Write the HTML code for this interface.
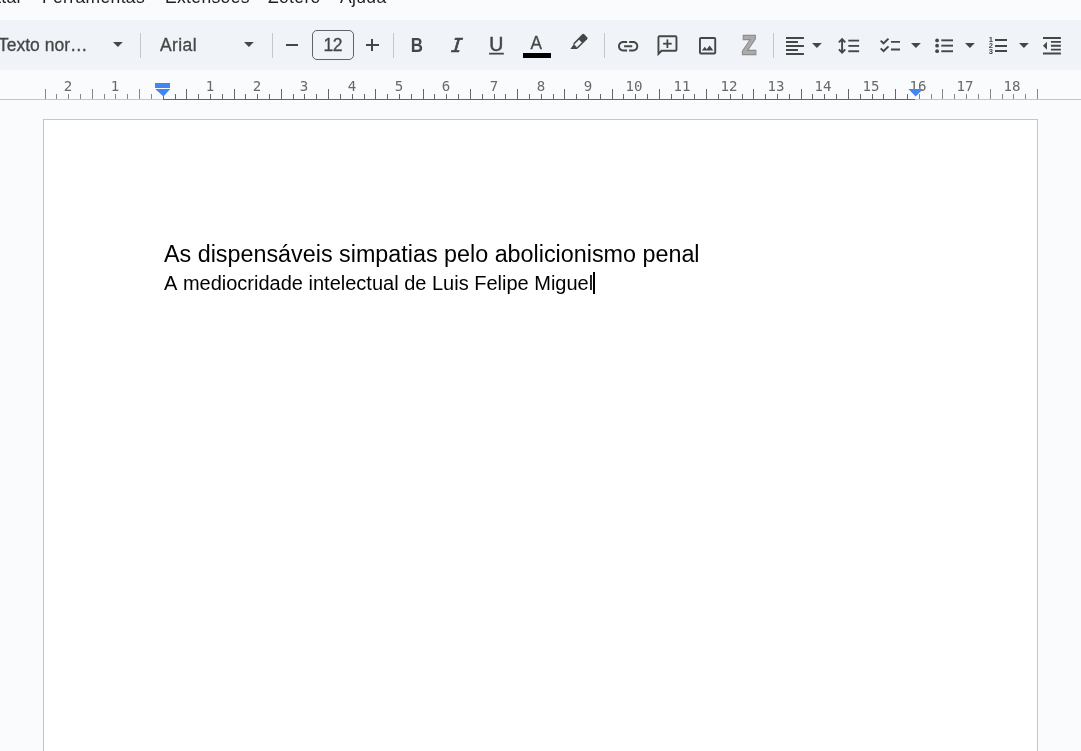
<!DOCTYPE html>
<html lang="pt-BR">
<head>
<meta charset="utf-8">
<title>Documento</title>
<style>
html,body{margin:0;padding:0}
body{width:1081px;height:751px;overflow:hidden;background:#f9fbfd;position:relative;font-family:"Liberation Sans",sans-serif;color:#444746}
.abs{position:absolute}
#menu span,.lbl,#fs,#ruler .n,.p1,.p2{will-change:transform}
#menu span{position:absolute;top:-13.200px;white-space:nowrap;font-size:17.5px;letter-spacing:.35px;color:#1f1f1f;line-height:20px}
#tb{position:absolute;left:-20px;top:20px;width:1120px;height:50px;background:#f0f4f9}
.sep{position:absolute;top:33px;width:1px;height:25px;background:#c7c7c7}
.lbl{position:absolute;top:34px;height:22px;line-height:22px;font-size:17.5px;color:#444746;white-space:nowrap;-webkit-text-stroke:.3px #444746}
.arr{position:absolute;top:43px;width:0;height:0;border-left:5px solid transparent;border-right:5px solid transparent;border-top:5px solid #444746}
svg.ic{position:absolute;display:block;fill:#444746;overflow:visible}
#fs{position:absolute;left:312px;top:30px;width:40px;height:28px;border:1px solid #5f6368;border-radius:5px;text-align:center;line-height:29px;font-size:17.5px;color:#444746;letter-spacing:-.7px;text-indent:-.7px;-webkit-text-stroke:.3px #444746}
#ruler{position:absolute;left:0;top:70px;width:1081px;height:30px}
#ruler .base{position:absolute;left:0;top:29px;width:1081px;height:1px;background:#c4c7c5}
#ruler .dark{position:absolute;left:163px;top:29px;width:752px;height:1px;background:#646765}
#ruler .t{position:absolute;top:24px;width:1px;height:5px;background:#646765}
#ruler .t.m{background:#858886}
#ruler .t.tl{top:19px;height:10px}
#ruler .n{position:absolute;top:8.4px;width:40px;text-align:center;font-family:"DejaVu Sans Mono","Liberation Mono",monospace;font-size:13.7px;line-height:16px;color:#666a68;transform:scaleX(1.03)}
#page{position:absolute;left:43px;top:119px;width:993px;height:700px;background:#fff;border:1px solid #c7c7c7}
.p1,.p2{font-kerning:none}
.p1{position:absolute;left:164px;top:240px;font-size:23.33px;line-height:28px;color:#000;white-space:nowrap}
.p2{position:absolute;left:164px;top:271px;font-size:20px;line-height:24px;color:#000;white-space:nowrap}
#caret{position:absolute;left:593px;top:272px;width:2px;height:22px;background:#000}
</style>
</head>
<body>
<div id="menu"><span style="right:1058.500px">Formatar</span><span style="left:42px">Ferramentas</span><span style="left:164.500px">Extensões</span><span style="left:268px">Zotero</span><span style="left:340px">Ajuda</span></div>
<div id="tb"></div>

<div class="lbl" style="left:-2px">Texto nor…</div>
<div class="sep" style="left:140px"></div>
<div class="lbl" style="left:160px;letter-spacing:.4px">Arial</div>
<div class="sep" style="left:272px"></div>
<div id="fs">12</div>
<div class="sep" style="left:393px"></div>
<div class="sep" style="left:604px"></div>
<div class="sep" style="left:773px"></div>

<svg class="ic" viewBox="2 7 20 10" preserveAspectRatio="none" style="left:618.3px;top:40.5px;width:20.3px;height:10.4px"><path d="M3.9 12c0-1.71 1.39-3.1 3.1-3.1h4V7H7c-2.76 0-5 2.24-5 5s2.24 5 5 5h4v-1.9H7c-1.71 0-3.1-1.39-3.1-3.1zM8 13h8v-2H8v2zm9-6h-4v1.900h4c1.710 0 3.100 1.390 3.100 3.100s-1.390 3.100-3.100 3.100h-4V17h4c2.760 0 5-2.240 5-5s-2.240-5-5-5z"/></svg>
<svg class="ic" viewBox="3 3 18 18" preserveAspectRatio="none" style="left:698.8px;top:37px;width:17.2px;height:17.4px"><path d="M19 5v14H5V5h14m0-2H5c-1.100 0-2 .9-2 2v14c0 1.100.9 2 2 2h14c1.100 0 2-.9 2-2V5c0-1.100-.9-2-2-2zm-4.860 8.860l-3 3.870L9 13.140 6 17h12l-3.860-5.140z"/></svg>
<svg class="ic" viewBox="3 3 18 18" preserveAspectRatio="none" style="left:786.1px;top:37px;width:17.9px;height:18px"><path d="M15 15H3v2h12v-2zm0-8H3v2h12V7zM3 13h18v-2H3v2zm0 8h18v-2H3v2zM3 3v2h18V3H3z"/></svg>
<svg class="ic" viewBox="2 3.93 20 15.07" preserveAspectRatio="none" style="left:880.2px;top:38.1px;width:20px;height:14.4px"><path d="M22 7h-9v2h9V7zm0 8h-9v2h9v-2zM5.540 11L2 7.460l1.410-1.410 2.120 2.120 4.240-4.240 1.410 1.410L5.540 11zm0 8L2 15.460l1.410-1.410 2.120 2.120 4.240-4.240 1.410 1.410L5.540 19z"/></svg>
<svg class="ic" viewBox="3 3 18 18" preserveAspectRatio="none" style="left:1043.1px;top:36.8px;width:17.9px;height:17.5px"><path d="M11 17h10v-2H11v2zm-8-5l4 4V8l-4 4zm0 9h18v-2H3v2zM3 3v2h18V3H3zm8 6h10V7H11v2zm0 4h10v-2H11v2z"/></svg>
<div class="abs" style="left:285.5px;top:43.9px;width:12.8px;height:2px;background:#444746"></div>
<div class="abs" style="left:366px;top:43.9px;width:12.8px;height:2px;background:#444746"></div>
<div class="abs" style="left:371.4px;top:38.5px;width:2px;height:12.8px;background:#444746"></div>
<div class="abs" style="left:523px;top:53px;width:28px;height:5px;background:#000"></div>
<div class="abs" style="left:995.2px;top:39px;width:11.7px;height:2px;background:#444746"></div>
<div class="abs" style="left:995.2px;top:44.5px;width:11.7px;height:2px;background:#444746"></div>
<div class="abs" style="left:995.2px;top:50px;width:11.7px;height:2px;background:#444746"></div>
<svg class="ic" style="left:0;top:0;width:1081px;height:80px" viewBox="0 0 1081 80"><g><rect x="577.05" y="33.6" width="7" height="14.8" rx="1.5" transform="rotate(45 580.55 40.9)"/><rect x="578.65" y="41.1" width="3.8" height="6.8" fill="#f0f4f9" transform="rotate(45 580.55 40.9)"/><path d="M570.4 48.900L573.700 44.300L578 48.900Z"/></g><text transform="translate(410.77 52.20) scale(0.824 1)" font-family="Liberation Sans, sans-serif" font-weight="bold" font-style="normal" font-size="20.49" fill="#444746">B</text><text transform="translate(450.84 52.45) skewX(-6) scale(0.964 1)" font-family="DejaVu Sans Mono, monospace" font-weight="normal" font-style="italic" font-size="19.07" fill="#444746" stroke="#444746" stroke-width="0.7">I</text><text transform="translate(489.25 50.56) scale(1.003 1)" font-family="Liberation Sans, sans-serif" font-weight="normal" font-style="normal" font-size="19.48" fill="#444746" stroke="#444746" stroke-width="0.5">U</text><text transform="translate(530.62 48.75) scale(0.931 1)" font-family="Liberation Sans, sans-serif" font-weight="normal" font-style="normal" font-size="18.46" fill="#444746" stroke="#444746" stroke-width="0.3">A</text><text transform="translate(742.13 53.60) scale(0.888 1)" font-family="Liberation Sans, sans-serif" font-weight="bold" font-style="normal" font-size="25.29" fill="#ababab" stroke="#8e8e8e" stroke-width="2.4" paint-order="stroke" stroke-linejoin="miter">Z</text><path d="M842.1 39.5V52.200M838.900 42.300L842.100 39.100L845.300 42.300M838.900 49.400L842.100 52.600L845.300 49.400" fill="none" stroke="#444746" stroke-width="1.9" stroke-linejoin="miter"/><rect x="848.3" y="39.7" width="10.8" height="1.8"/><rect x="848.3" y="45.0" width="10.8" height="1.8"/><rect x="848.3" y="50.3" width="10.8" height="1.9"/><rect x="489.1" y="52.75" width="14.7" height="1.8"/><path d="M658.45 54V37.300a1 1 0 0 1 1-1h16a1 1 0 0 1 1 1v12.500a1 1 0 0 1-1 1H661.500Z" fill="none" stroke="#444746" stroke-width="1.9" stroke-linejoin="miter"/><rect x="663.1" y="42.8" width="8.600" height="1.800"/><rect x="666.5" y="39.400" width="1.800" height="8.600"/><text x="990.9" y="42.0" text-anchor="middle" font-family="Liberation Sans, sans-serif" font-weight="bold" font-size="7.6">1</text><text x="990.9" y="48.1" text-anchor="middle" font-family="Liberation Sans, sans-serif" font-weight="bold" font-size="7.6">2</text><text x="990.9" y="54.3" text-anchor="middle" font-family="Liberation Sans, sans-serif" font-weight="bold" font-size="7.6">3</text><circle cx="937.1" cy="40.4" r="1.9"/><rect x="941.3" y="39.4" width="11.7" height="1.9"/><circle cx="937.1" cy="45.7" r="1.9"/><rect x="941.3" y="44.7" width="11.7" height="1.9"/><circle cx="937.1" cy="51.2" r="1.9"/><rect x="941.3" y="50.3" width="11.7" height="1.9"/></svg>
<svg class="ic" viewBox="0 0 10 5" style="left:812.4px;top:42.8px;width:9.800px;height:5.100px"><path d="M0 0h10L5 5z"/></svg>
<svg class="ic" viewBox="0 0 10 5" style="left:910.7px;top:42.8px;width:9.800px;height:5.100px"><path d="M0 0h10L5 5z"/></svg>
<svg class="ic" viewBox="0 0 10 5" style="left:964.6px;top:42.8px;width:9.800px;height:5.100px"><path d="M0 0h10L5 5z"/></svg>
<svg class="ic" viewBox="0 0 10 5" style="left:1018.6px;top:42.8px;width:9.800px;height:5.100px"><path d="M0 0h10L5 5z"/></svg>
<svg class="ic" viewBox="0 0 10 5" style="left:112.5px;top:41.9px;width:9.800px;height:5.100px"><path d="M0 0h10L5 5z"/></svg>
<svg class="ic" viewBox="0 0 10 5" style="left:243.5px;top:41.9px;width:9.800px;height:5.100px"><path d="M0 0h10L5 5z"/></svg>


<div id="ruler">
<div class="base"></div><div class="dark"></div>
<i class="t tl m" style="left:45px"></i>
<i class="t m" style="left:56px"></i>
<i class="t m" style="left:68px"></i>
<i class="t m" style="left:80px"></i>
<i class="t tl m" style="left:92px"></i>
<i class="t m" style="left:104px"></i>
<i class="t m" style="left:115px"></i>
<i class="t m" style="left:127px"></i>
<i class="t tl m" style="left:139px"></i>
<i class="t m" style="left:151px"></i>
<i class="t" style="left:163px"></i>
<i class="t" style="left:175px"></i>
<i class="t tl" style="left:186px"></i>
<i class="t" style="left:198px"></i>
<i class="t" style="left:210px"></i>
<i class="t" style="left:222px"></i>
<i class="t tl" style="left:234px"></i>
<i class="t" style="left:245px"></i>
<i class="t" style="left:257px"></i>
<i class="t" style="left:269px"></i>
<i class="t tl" style="left:281px"></i>
<i class="t" style="left:293px"></i>
<i class="t" style="left:304px"></i>
<i class="t" style="left:316px"></i>
<i class="t tl" style="left:328px"></i>
<i class="t" style="left:340px"></i>
<i class="t" style="left:352px"></i>
<i class="t" style="left:364px"></i>
<i class="t tl" style="left:375px"></i>
<i class="t" style="left:387px"></i>
<i class="t" style="left:399px"></i>
<i class="t" style="left:411px"></i>
<i class="t tl" style="left:423px"></i>
<i class="t" style="left:434px"></i>
<i class="t" style="left:446px"></i>
<i class="t" style="left:458px"></i>
<i class="t tl" style="left:470px"></i>
<i class="t" style="left:482px"></i>
<i class="t" style="left:494px"></i>
<i class="t" style="left:505px"></i>
<i class="t tl" style="left:517px"></i>
<i class="t" style="left:529px"></i>
<i class="t" style="left:541px"></i>
<i class="t" style="left:553px"></i>
<i class="t tl" style="left:564px"></i>
<i class="t" style="left:576px"></i>
<i class="t" style="left:588px"></i>
<i class="t" style="left:600px"></i>
<i class="t tl" style="left:612px"></i>
<i class="t" style="left:623px"></i>
<i class="t" style="left:635px"></i>
<i class="t" style="left:647px"></i>
<i class="t tl" style="left:659px"></i>
<i class="t" style="left:671px"></i>
<i class="t" style="left:683px"></i>
<i class="t" style="left:694px"></i>
<i class="t tl" style="left:706px"></i>
<i class="t" style="left:718px"></i>
<i class="t" style="left:730px"></i>
<i class="t" style="left:742px"></i>
<i class="t tl" style="left:753px"></i>
<i class="t" style="left:765px"></i>
<i class="t" style="left:777px"></i>
<i class="t" style="left:789px"></i>
<i class="t tl" style="left:801px"></i>
<i class="t" style="left:812px"></i>
<i class="t" style="left:824px"></i>
<i class="t" style="left:836px"></i>
<i class="t tl" style="left:848px"></i>
<i class="t" style="left:860px"></i>
<i class="t" style="left:872px"></i>
<i class="t" style="left:883px"></i>
<i class="t tl" style="left:895px"></i>
<i class="t" style="left:907px"></i>
<i class="t m" style="left:919px"></i>
<i class="t m" style="left:931px"></i>
<i class="t tl m" style="left:942px"></i>
<i class="t m" style="left:954px"></i>
<i class="t m" style="left:966px"></i>
<i class="t m" style="left:978px"></i>
<i class="t tl m" style="left:990px"></i>
<i class="t m" style="left:1002px"></i>
<i class="t m" style="left:1013px"></i>
<i class="t m" style="left:1025px"></i>
<i class="t tl m" style="left:1037px"></i>
<span class="n" style="left:48.3px">2</span>
<span class="n" style="left:95.3px">1</span>
<span class="n" style="left:190.3px">1</span>
<span class="n" style="left:237.3px">2</span>
<span class="n" style="left:284.3px">3</span>
<span class="n" style="left:332.3px">4</span>
<span class="n" style="left:379.3px">5</span>
<span class="n" style="left:426.3px">6</span>
<span class="n" style="left:474.3px">7</span>
<span class="n" style="left:521.3px">8</span>
<span class="n" style="left:568.3px">9</span>
<span class="n" style="left:614.3px">10</span>
<span class="n" style="left:662.3px">11</span>
<span class="n" style="left:709.3px">12</span>
<span class="n" style="left:756.3px">13</span>
<span class="n" style="left:803.3px">14</span>
<span class="n" style="left:851.3px">15</span>
<span class="n" style="left:898.3px">16</span>
<span class="n" style="left:945.3px">17</span>
<span class="n" style="left:992.3px">18</span>
</div>

<!-- ruler markers -->
<svg class="abs" style="left:0;top:70px;width:1081px;height:30px" viewBox="0 70 1081 30"><g fill="#4285f4"><rect x="155" y="83" width="15" height="5"/><path d="M155.3 89H170.300L163.400 96.500Z"/><path d="M908.4 89H923.200L915.700 96.400Z"/></g></svg>
<div id="page"></div>
<div class="p1">As dispensáveis simpatias pelo abolicionismo penal</div>
<div class="p2">A mediocridade intelectual de Luis Felipe Miguel</div>
<div id="caret"></div>
</body>
</html>
